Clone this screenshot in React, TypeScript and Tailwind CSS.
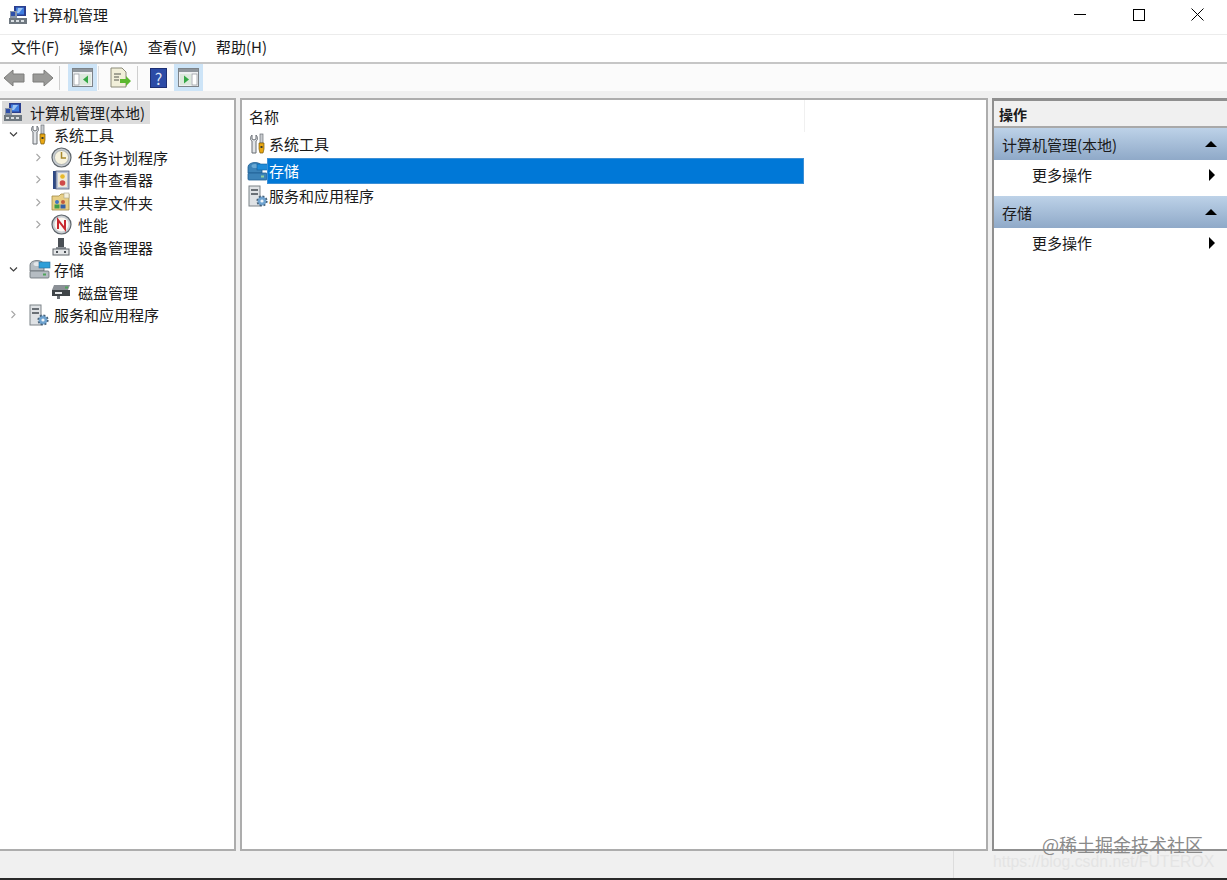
import React from "react";

const fontStack = { fontFamily: '"Noto Sans CJK SC", "Liberation Sans", sans-serif' };

function ComputerIcon() {
  return (
    <svg width="20" height="20" viewBox="0 0 20 20" className="shrink-0">
      <rect x="6" y="1" width="12" height="10" fill="#2b3f8f" />
      <rect x="8" y="2.5" width="8" height="7" fill="#3f7de0" />
      <path d="M10 3 L15 3 L11 8 L9 8 Z" fill="#9cc4f2" />
      <rect x="2" y="6" width="7" height="7" fill="#8a96a8" />
      <rect x="3" y="7" width="4" height="4" fill="#2f4fa8" />
      <rect x="1" y="13" width="18" height="6" fill="#6f7880" />
      <rect x="3" y="15" width="3" height="2" fill="#d9dee2" />
      <rect x="8" y="15" width="3" height="2" fill="#d9dee2" />
      <rect x="13" y="15" width="3" height="2" fill="#d9dee2" />
    </svg>
  );
}

function ToolsIcon() {
  return (
    <svg width="20" height="22" viewBox="0 0 20 22" className="shrink-0">
      <path d="M4 2 L4 6 L6 7 L8 6 L8 2 C10 4 10 7 8 8 L8 20 L4 20 L4 8 C2 7 2 4 4 2 Z" fill="#e2e5e8" stroke="#6a6f75" strokeWidth="1" />
      <rect x="12" y="1" width="3" height="9" fill="#c9ccd0" stroke="#6a6f75" strokeWidth="0.7" />
      <path d="M11 10 L16 10 L16 16 L15 20 L12 20 L11 16 Z" fill="#e9a713" stroke="#7a5a08" strokeWidth="0.7" />
      <rect x="12.5" y="13" width="2" height="2" fill="#3a3a2a" />
    </svg>
  );
}

function ClockIcon() {
  return (
    <svg width="21" height="21" viewBox="0 0 21 21" className="shrink-0">
      <circle cx="10.5" cy="10.5" r="9.5" fill="#c9ced2" stroke="#5f666c" strokeWidth="1.2" />
      <circle cx="10.5" cy="10.5" r="7" fill="#f7f3df" stroke="#9aa0a5" strokeWidth="0.7" />
      <path d="M10.5 5 L10.5 11 L15 11" fill="none" stroke="#a8892c" strokeWidth="1.5" />
    </svg>
  );
}

function EventIcon() {
  return (
    <svg width="20" height="20" viewBox="0 0 20 20" className="shrink-0">
      <rect x="2" y="1" width="4" height="18" fill="#2f4a86" />
      <rect x="5" y="1" width="13" height="18" fill="#b9c3d6" stroke="#56607a" strokeWidth="0.8" />
      <rect x="7" y="3" width="9" height="14" fill="#f0ead8" />
      <circle cx="11.5" cy="6.5" r="2.3" fill="#e7b92c" />
      <circle cx="11.5" cy="13" r="2.8" fill="#cf4a4a" />
    </svg>
  );
}

function ShareIcon() {
  return (
    <svg width="20" height="20" viewBox="0 0 20 20" className="shrink-0">
      <path d="M1 4 L8 4 L10 2 L18 2 L18 18 L1 18 Z" fill="#e8cf86" stroke="#a18a44" strokeWidth="0.8" />
      <rect x="13" y="1" width="5" height="5" fill="#f6f1dc" stroke="#a9a48e" strokeWidth="0.6" />
      <circle cx="6" cy="10" r="2" fill="#3f74c2" />
      <rect x="3.5" y="12.5" width="5" height="4" fill="#3e9d4a" />
      <circle cx="12" cy="10" r="2" fill="#c25b3f" />
      <rect x="9.5" y="12.5" width="5" height="4" fill="#345fa8" />
    </svg>
  );
}

function PerfIcon() {
  return (
    <svg width="21" height="21" viewBox="0 0 21 21" className="shrink-0">
      <circle cx="10.5" cy="10.5" r="9.5" fill="#c9ced2" stroke="#5f666c" strokeWidth="1.2" />
      <circle cx="10.5" cy="10.5" r="7" fill="#fbf8f2" />
      <path d="M7 15 L7 6 L14 15 L14 6" fill="none" stroke="#c8282e" strokeWidth="2" />
    </svg>
  );
}

function DeviceIcon() {
  return (
    <svg width="20" height="20" viewBox="0 0 20 20" className="shrink-0">
      <rect x="7" y="1" width="6" height="9" fill="#4a4f55" />
      <rect x="5" y="10" width="10" height="2" fill="#8b9096" />
      <rect x="2" y="12" width="16" height="6" fill="#e4e6e8" stroke="#5d6268" strokeWidth="1" />
      <rect x="5" y="14" width="2" height="2" fill="#4a4f55" />
      <rect x="13" y="14" width="2" height="2" fill="#4a4f55" />
    </svg>
  );
}

function StorageIcon({ blue = false }: { blue?: boolean }) {
  const body = blue ? "#3c83b8" : "#b5bcc2";
  const edge = blue ? "#1f5f94" : "#646c72";
  return (
    <svg width="22" height="21" viewBox="0 0 22 21" className="shrink-0">
      <path d="M1 6 C1 0 15 0 15 6 L15 12 L1 12 Z" fill={body} stroke={edge} strokeWidth="0.8" />
      <ellipse cx="8" cy="5" rx="3.5" ry="2" fill={blue ? "#6aa9d4" : "#e3e6e9"} />
      <rect x="10" y="3" width="11" height="6" fill={blue ? "#1f8bd8" : "#2f9fd8"} stroke={blue ? "#155f9a" : "#2a6f9c"} strokeWidth="0.6" />
      <rect x="1" y="12" width="19" height="7" rx="1" fill={body} stroke={edge} strokeWidth="0.8" />
      <rect x="14" y="14.5" width="3" height="2" fill={blue ? "#8fd0a0" : "#4fa35a"} />
    </svg>
  );
}

function DiskIcon() {
  return (
    <svg width="20" height="16" viewBox="0 0 20 16" className="shrink-0">
      <path d="M3 1 L19 1 L17 6 L1 6 Z" fill="#8b9096" />
      <rect x="1" y="6" width="18" height="6" fill="#3f4448" />
      <rect x="4" y="8" width="7" height="2" fill="#e6e8ea" />
      <rect x="14" y="2.5" width="3" height="2" fill="#4fa35a" />
      <rect x="6" y="12" width="3" height="3" fill="#6a6f75" />
    </svg>
  );
}

function ServiceIcon() {
  return (
    <svg width="20" height="22" viewBox="0 0 20 22" className="shrink-0">
      <rect x="1" y="1" width="11" height="20" fill="#dfe2e5" stroke="#7d8388" strokeWidth="1" />
      <rect x="3" y="4" width="7" height="2" fill="#6a7076" />
      <rect x="3" y="8" width="7" height="2" fill="#6a7076" />
      <circle cx="14" cy="16" r="4.5" fill="#6fa3d0" />
      <circle cx="14" cy="16" r="4.8" fill="none" stroke="#47627a" strokeWidth="1.6" strokeDasharray="2 1.75" />
      <circle cx="14" cy="16" r="1.6" fill="#eef4f8" />
    </svg>
  );
}

function Chevron({ open }: { open?: boolean }) {
  return (
    <svg width="9" height="9" viewBox="0 0 9 9" className="shrink-0">
      {open ? (
        <path d="M1 2.5 L4.5 6 L8 2.5" fill="none" stroke="#404040" strokeWidth="1.2" />
      ) : (
        <path d="M2.5 1 L6 4.5 L2.5 8" fill="none" stroke="#a6a6a6" strokeWidth="1.1" />
      )}
    </svg>
  );
}

function ArrowIcon({ dir }: { dir: "left" | "right" }) {
  return (
    <svg width="22" height="18" viewBox="0 0 22 18">
      <path
        d={dir === "left" ? "M1 9 L10 1 L10 5 L21 5 L21 13 L10 13 L10 17 Z" : "M21 9 L12 1 L12 5 L1 5 L1 13 L12 13 L12 17 Z"}
        fill="#9a9a98"
        stroke="#7d7d7b"
        strokeWidth="1"
      />
    </svg>
  );
}

function PaneIcon({ side }: { side: "left" | "right" }) {
  return (
    <svg width="21" height="19" viewBox="0 0 21 19">
      <rect x="0.5" y="0.5" width="20" height="18" fill="#eef0f2" stroke="#7d8388" />
      <rect x="1" y="1" width="19" height="3" fill="#8f969c" />
      {side === "left" ? (
        <>
          <rect x="2" y="6" width="5" height="11" fill="#fff" stroke="#8d9398" strokeWidth="0.7" />
          <rect x="8" y="6" width="11" height="11" fill="#dce9dc" />
          <path d="M16 7.5 L11 11.5 L16 15.5 Z" fill="#35a845" />
        </>
      ) : (
        <>
          <rect x="2" y="6" width="11" height="11" fill="#dce9dc" />
          <path d="M6 7.5 L11 11.5 L6 15.5 Z" fill="#35a845" />
          <rect x="14" y="6" width="5" height="11" fill="#fff" stroke="#8d9398" strokeWidth="0.7" />
        </>
      )}
    </svg>
  );
}

function ExportIcon() {
  return (
    <svg width="22" height="21" viewBox="0 0 22 21">
      <path d="M1 1 L12 1 L16 5 L16 20 L1 20 Z" fill="#f1efd9" stroke="#8b8a78" strokeWidth="1" />
      <path d="M4 7 H11 M4 10 H9 M4 13 H9" stroke="#55574f" strokeWidth="1" />
      <path d="M10 12 L16 12 L16 9 L21 14 L16 19 L16 16 L10 16 Z" fill="#5cb82f" />
    </svg>
  );
}

function HelpIcon() {
  return (
    <div className="w-[17px] h-[20px] bg-[#2c4ba6] border border-[#1d2f73] flex items-center justify-center text-[#dfe6f5] text-[16px] font-normal leading-none">
      ?
    </div>
  );
}

function ToolButton({ active, children }: { active?: boolean; children: React.ReactNode }) {
  return (
    <div className={`w-[29px] h-[27px] flex items-center justify-center ${active ? "bg-[#cde4f7]" : ""}`}>
      {children}
    </div>
  );
}

function TopRow({ chevron, icon, label }: { chevron: "open" | "closed"; icon: React.ReactNode; label: string }) {
  return (
    <div className="h-[22.5px] flex items-center pl-[9px]">
      <div className="w-[20px] flex items-center shrink-0">
        <Chevron open={chevron === "open"} />
      </div>
      <div className="w-[25px] flex items-center shrink-0">{icon}</div>
      <span>{label}</span>
    </div>
  );
}

function ChildRow({ chevron, icon, label }: { chevron?: boolean; icon: React.ReactNode; label: string }) {
  return (
    <div className="h-[22.5px] flex items-center pl-[34px]">
      <div className="w-[17px] flex items-center shrink-0">{chevron && <Chevron />}</div>
      <div className="w-[27px] flex items-center shrink-0">{icon}</div>
      <span>{label}</span>
    </div>
  );
}

function ActionHeader({ label }: { label: string }) {
  return (
    <div className="h-[32px] flex items-center justify-between pl-[8px] pr-[10px] bg-gradient-to-b from-[#bdd2e8] to-[#8fa9c8]">
      <span>{label}</span>
      <div className="w-0 h-0 border-l-[6px] border-r-[6px] border-b-[6px] border-l-transparent border-r-transparent border-b-black" />
    </div>
  );
}

function ActionItem({ label }: { label: string }) {
  return (
    <div className="h-[36px] flex items-center justify-between pl-[38px] pr-[12px] bg-white pb-[7px]">
      <span>{label}</span>
      <div className="w-0 h-0 border-t-[6px] border-b-[6px] border-l-[6px] border-t-transparent border-b-transparent border-l-black" />
    </div>
  );
}

export default function App() {
  return (
    <div className="relative w-[1227px] h-[880px] overflow-hidden bg-[#f0f0f0] text-[15px] leading-none text-[#1a1a1a] flex flex-col" style={fontStack}>
      {/* title bar */}
      <div className="h-[35px] shrink-0 bg-white border-b border-[#ececec] flex items-center justify-between pl-[8px] pb-[5px]">
        <div className="flex items-center gap-[5px]">
          <ComputerIcon />
          <span>计算机管理</span>
        </div>
        <div className="flex items-center">
          <div className="w-[59px] flex justify-center">
            <div className="w-[12px] h-px bg-black" />
          </div>
          <div className="w-[59px] flex justify-center">
            <div className="w-[12px] h-[12px] border border-black" />
          </div>
          <div className="w-[59px] flex justify-center">
            <svg width="13" height="13" viewBox="0 0 13 13">
              <path d="M0.5 0.5 L12.5 12.5 M12.5 0.5 L0.5 12.5" stroke="#000" strokeWidth="1" fill="none" />
            </svg>
          </div>
        </div>
      </div>

      {/* menu */}
      <div className="h-[29px] shrink-0 bg-white border-b-2 border-[#c6c6c6] flex items-center pl-[11px] gap-[19.5px] pb-[4px]">
        <span>文件(F)</span>
        <span>操作(A)</span>
        <span>查看(V)</span>
        <span>帮助(H)</span>
      </div>

      {/* toolbar */}
      <div className="h-[27px] shrink-0 bg-[#fbfbfb] flex items-center pl-[3px]">
        <div className="w-[29px] flex justify-start">
          <ArrowIcon dir="left" />
        </div>
        <div className="w-[27px] flex justify-start">
          <ArrowIcon dir="right" />
        </div>
        <div className="w-px h-[24px] bg-[#cfcfcf] mr-[8px]" />
        <ToolButton active>
          <PaneIcon side="left" />
        </ToolButton>
        <div className="w-px h-[24px] bg-[#dedede] ml-[1px] mr-[11px]" />
        <ExportIcon />
        <div className="w-px h-[24px] bg-[#cfcfcf] ml-[5px] mr-[12px]" />
        <HelpIcon />
        <div className="w-[7px]" />
        <ToolButton active>
          <PaneIcon side="right" />
        </ToolButton>
      </div>

      {/* panes */}
      <div className="h-[760px] shrink-0 flex pt-[7px] bg-[#f0f0f0]">
        <div className="w-[236px] shrink-0 bg-white border-2 border-[#adadad] border-l-0 pt-[1px]">
          <div className="h-[22.5px] w-[148px] ml-[2px] flex items-center pl-[1px] bg-[#dcdcdc]">
            <div className="w-[27px] shrink-0 flex">
              <ComputerIcon />
            </div>
            <span>计算机管理(本地)</span>
          </div>
          <TopRow chevron="open" icon={<ToolsIcon />} label="系统工具" />
          <ChildRow chevron icon={<ClockIcon />} label="任务计划程序" />
          <ChildRow chevron icon={<EventIcon />} label="事件查看器" />
          <ChildRow chevron icon={<ShareIcon />} label="共享文件夹" />
          <ChildRow chevron icon={<PerfIcon />} label="性能" />
          <ChildRow icon={<DeviceIcon />} label="设备管理器" />
          <TopRow chevron="open" icon={<StorageIcon />} label="存储" />
          <ChildRow icon={<DiskIcon />} label="磁盘管理" />
          <TopRow chevron="closed" icon={<ServiceIcon />} label="服务和应用程序" />
        </div>

        <div className="w-[748px] shrink-0 ml-[4px] bg-white border-2 border-[#adadad] pl-[5px]">
          <div className="h-[32px] w-[558px] flex items-center pl-[2px] border-r border-[#f0f0f0] pt-[1px]">名称</div>
          <div className="h-[23px] flex items-center gap-[1px] pl-[1px]">
            <ToolsIcon />
            <span>系统工具</span>
          </div>
          <div className="h-[26px] mt-[3px] flex items-center">
            <div className="w-[20px] shrink-0 flex">
              <StorageIcon blue />
            </div>
            <div className="w-[537px] h-[26px] bg-[#0078d7] text-white flex items-center pl-[1px] pb-[2px] border border-[#3c8fd6] relative">存储</div>
          </div>
          <div className="h-[23px] flex items-center gap-[1px] pl-[1px]">
            <ServiceIcon />
            <span>服务和应用程序</span>
          </div>
        </div>

        <div className="flex-1 ml-[4px] bg-white border-l-2 border-t-[3px] border-b-2 border-[#8f8f8f]">
          <div className="h-[27px] bg-[#f0f0f0] border-b-2 border-[#a9a9a9] flex items-center pl-[5px] pt-[1px] font-bold text-[14px]">操作</div>
          <ActionHeader label="计算机管理(本地)" />
          <ActionItem label="更多操作" />
          <ActionHeader label="存储" />
          <ActionItem label="更多操作" />
        </div>
      </div>

      {/* status bar */}
      <div className="flex-1 bg-[#f0f0f0] flex justify-end">
        <div className="w-[274px] border-l border-[#dddddd]" />
      </div>
      <div className="h-[2px] shrink-0 bg-[#2a2a2a]" />

      {/* watermark */}
      <div className="absolute left-[1042px] top-[835px] text-[18px] text-[#8a8a8a] whitespace-nowrap">@稀土掘金技术社区</div>
      <div className="absolute left-[993px] top-[854px] text-[15.8px] text-[#e4e4e4] whitespace-nowrap" style={{ fontFamily: '"Liberation Sans", sans-serif' }}>
        https://blog.csdn.net/FUTEROX
      </div>
    </div>
  );
}
